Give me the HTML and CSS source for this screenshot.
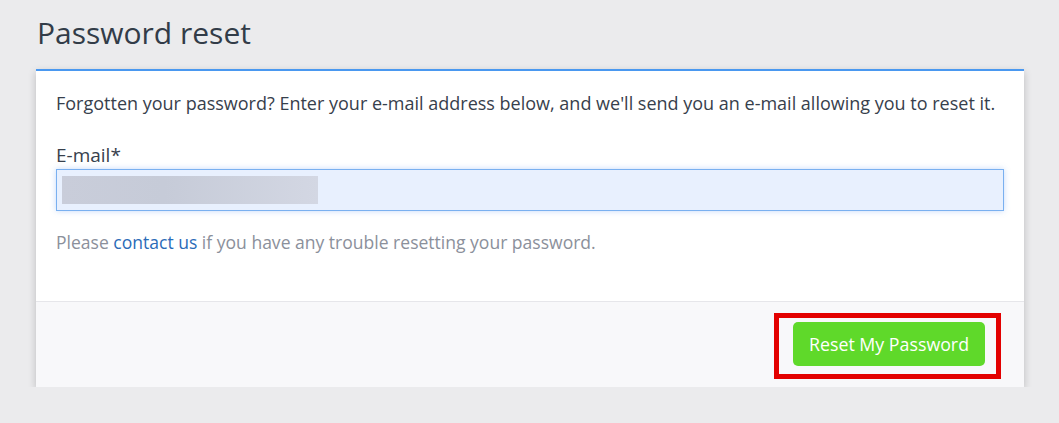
FILE: index.html
```html
<!DOCTYPE html>
<html lang="en">
<head>
<meta charset="utf-8">
<title>Password reset</title>
<link rel="stylesheet" href="styles.css">
</head>
<body>
<div class="page">
  <h1 class="title">Password reset</h1>
  <div class="card">
    <div class="card-body">
      <p class="intro">Forgotten your password? Enter your e-mail address below, and we'll send you an e-mail allowing you to reset it.</p>
      <label class="label">E-mail*</label>
      <div class="field"><div class="redact"></div></div>
      <p class="help">Please <a href="#" class="link">contact us</a> if you have any trouble resetting your password.</p>
    </div>
    <div class="card-footer">
      <div class="highlight">
        <button class="btn" type="button">Reset My Password</button>
      </div>
    </div>
  </div>
</div>
</body>
</html>
```

FILE: styles.css
```css
html, body {
  margin: 0;
  padding: 0;
  background: #ebebed;
  font-family: "Open Sans", "Liberation Sans", sans-serif;
}
.page {
  padding: 12px 35px 0 36px;
}
.title {
  margin: 0 0 15px 1px;
  font-size: 30px;
  font-weight: 400;
  line-height: 42px;
  color: #323c48;
}
.card {
  background: #fff;
  border-top: 2px solid #4a98f0;
  box-shadow: 0 3px 8px rgba(0, 0, 0, 0.2);
}
.card-body {
  padding: 19px 20px 46px 20px;
}
.intro {
  margin: 0;
  font-size: 18px;
  line-height: 26px;
  color: #37404c;
}
.label {
  display: block;
  margin-top: 26px;
  font-size: 19px;
  line-height: 26px;
  color: #37404c;
}
.field {
  margin-top: 1px;
  height: 40px;
  border: 1px solid #7ab0f0;
  background: #e8f0fe;
  box-shadow: 0 0 6px rgba(90, 150, 240, 0.35);
  display: flex;
  align-items: center;
  padding: 0 5px;
}
.redact {
  width: 256px;
  height: 28px;
  background: linear-gradient(90deg, #c9cdda 0%, #c6cbd8 40%, #d3d7e3 100%);
}
.help {
  margin: 19px 0 0;
  font-size: 17.55px;
  line-height: 25px;
  color: #8b909b;
}
.link {
  color: #2b6bb8;
  text-decoration: none;
}
.card-footer {
  border-top: 1px solid #e6e6ea;
  background: #f8f8fa;
  display: flex;
  justify-content: flex-end;
  padding: 11px 23px 8px 0;
}
.highlight {
  border: 5px solid #e30000;
  padding: 4px 11px 8px 14px;
}
.btn {
  display: block;
  width: 192px;
  height: 44px;
  border: none;
  border-radius: 5px;
  background: #5fd92a;
  color: #fff;
  font-family: "Open Sans", "Liberation Sans", sans-serif;
  font-size: 17.8px;
  padding: 0;
}
```
